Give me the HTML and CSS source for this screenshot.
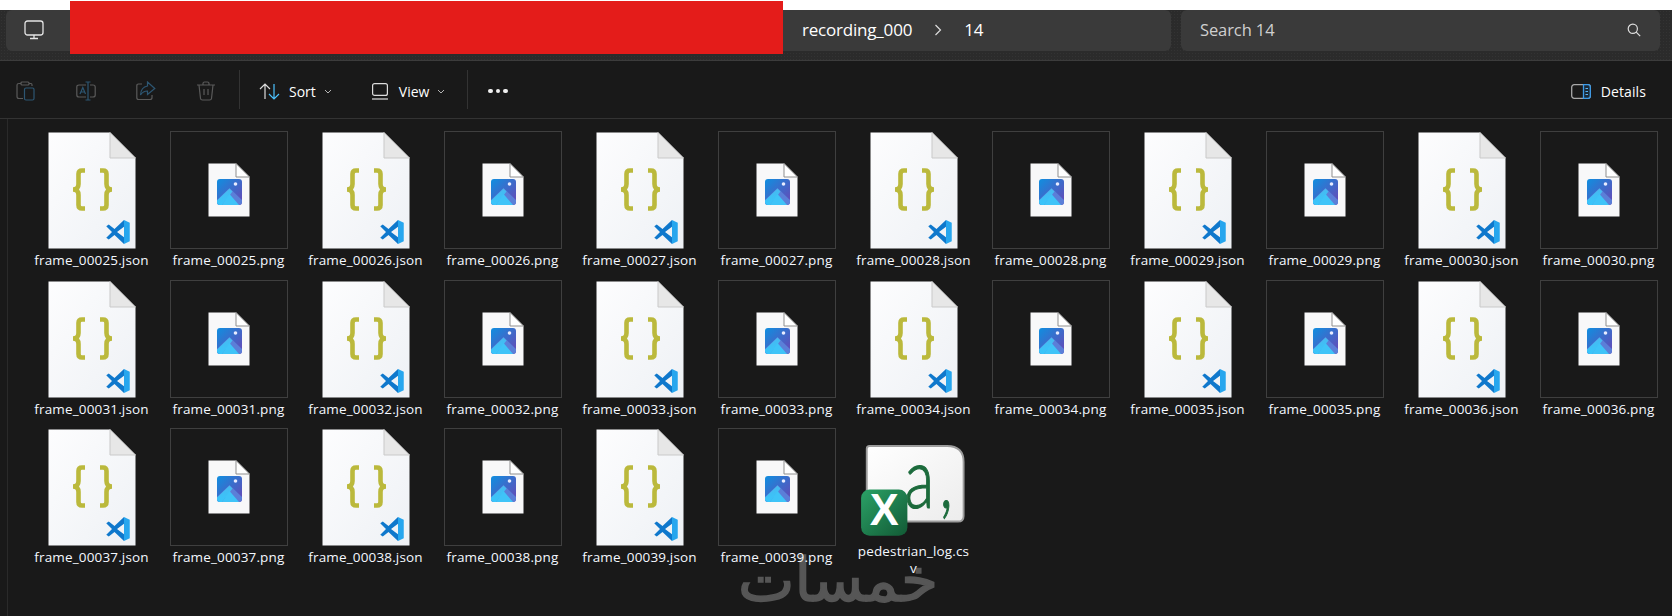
FILE: index.html
```html
<!DOCTYPE html>
<html lang="en">
<head>
<meta charset="utf-8">
<title>14 - File Explorer</title>
<link rel="stylesheet" href="styles.css">
</head>
<body>
<svg class="defs" width="0" height="0" aria-hidden="true">
  <defs>
    <linearGradient id="page" x1="0" y1="0" x2="1" y2="1"><stop offset="0" stop-color="#fdfdfe"/><stop offset="1" stop-color="#eef1f5"/></linearGradient>
    <linearGradient id="tile" x1="0" y1="0" x2="1" y2="1"><stop offset="0" stop-color="#0f8fe0"/><stop offset="1" stop-color="#6b46b4"/></linearGradient>
    <linearGradient id="peak" x1="0" y1="0" x2="0" y2="1"><stop offset="0" stop-color="#47b9f0"/><stop offset="1" stop-color="#38c6fb"/></linearGradient>
    <linearGradient id="xl" x1="0" y1="0" x2="1" y2="1"><stop offset="0" stop-color="#2ba267"/><stop offset="1" stop-color="#125a35"/></linearGradient>
    <linearGradient id="card" x1="0" y1="0" x2="1" y2="1"><stop offset="0" stop-color="#ffffff"/><stop offset="1" stop-color="#ececec"/></linearGradient>
    <symbol id="json" viewBox="0 0 88 117">
      <path d="M.5.5H62L87.500 26V116.500H.5Z" fill="url(#page)"/>
      <path d="M62 .5L87.500 26H62Z" fill="#e7e7e7" stroke="#c9c9c9"/>
      <g fill="none" stroke="#bbb93c" stroke-width="4.600">
        <path d="M37 38.500H34Q30.500 38.500 30.500 42V52Q30.500 57.500 25 57.500Q30.500 57.500 30.500 63V73Q30.500 76.500 34 76.500H37"/>
        <path d="M52 38.500H55Q58.500 38.500 58.500 42V52Q58.500 57.500 64 57.500Q58.500 57.500 58.500 63V73Q58.500 76.500 55 76.500H52"/>
      </g>
      <g transform="translate(57.500 87.500) scale(.25)">
        <path d="M74 2L97 13V87L74 98Z" fill="#27a6ee"/>
        <path d="M74 2L36 38L13 20L3 27L26 50L3 73L13 80L36 62L74 98V71L46 50L74 29Z" fill="#0f78cc"/>
      </g>
    </symbol>
    <symbol id="png" viewBox="0 0 42 54">
      <path d="M.5.5H28L41.500 14V53.500H.5Z" fill="#f8f8f9"/>
      <path d="M28 .5L41.500 14H28Z" fill="#fff" stroke="#8f8f8f"/>
      <rect x="9" y="16" width="25" height="26" rx="3" fill="url(#tile)"/>
      <circle cx="27.500" cy="21" r="1.800" fill="#e8ecff"/>
      <path d="M9 37L21.500 25L34 37V39Q34 42 31 42H12Q9 42 9 39Z" fill="#5b7fd8"/>
      <path d="M9 37.500L21.500 25.500L24.500 28.500L14 42H12Q9 42 9 39Z" fill="url(#peak)"/>
      <path d="M14 42L21.500 31L31 42Z" fill="#3fc4f8"/>
    </symbol>
    <symbol id="monitor" viewBox="0 0 20 20">
      <g fill="none" stroke="#e4e4e4" stroke-width="1.300">
        <rect x="1" y="1" width="18" height="14" rx="2.500"/>
        <path d="M6 18.500H14M10 15V18.500"/>
      </g>
    </symbol>
    <symbol id="chev-r" viewBox="0 0 8 12">
      <path d="M1.500 1L6.500 6L1.500 11" fill="none" stroke="#dcdcdc" stroke-width="1.200"/>
    </symbol>
    <symbol id="chev-d" viewBox="0 0 8 5">
      <path d="M1 1L4 4L7 1" fill="none" stroke="#b5b5b5" stroke-width="1"/>
    </symbol>
  </defs>
</svg>

<div class="window">
  <header class="topbar">
    <nav class="crumbs">
      <svg class="ico-monitor"><use href="#monitor"/></svg>
      <svg class="ico-chev"><use href="#chev-r"/></svg>
      <span class="crumb-spacer"></span>
      <span class="crumb">recording_000</span>
      <svg class="ico-chev near"><use href="#chev-r"/></svg>
      <span class="crumb">14</span>
    </nav>
    <div class="search">
      <span>Search 14</span>
      <svg class="ico-search" viewBox="0 0 14 14"><circle cx="5.800" cy="5.800" r="4.600" fill="none" stroke="#dedede" stroke-width="1.200"/><path d="M9.200 9.200L13.200 13.200" stroke="#dedede" stroke-width="1.200"/></svg>
    </div>
  </header>

  <div class="toolbar">
    <button class="tool"><svg class="ico-tool" viewBox="0 0 20 20"><g fill="none" stroke-width="1.200"><path d="M7 17.500H3Q1 17.500 1 15.500V4Q1 2.500 3 2.500H5M13 2.500H15Q16 2.500 16 4V5" stroke="#5a5a5a"/><rect x="5" y="1" width="8" height="3" rx="1" stroke="#5a5a5a"/><rect x="8.500" y="7" width="9.500" height="12" rx="1.500" stroke="#2d5672"/></g></svg></button>
    <button class="tool"><svg class="ico-tool" viewBox="0 0 20 20"><g fill="none" stroke-width="1.200"><path d="M10 4H3Q.800 4 .800 6V14Q.800 16 3 16H10M14 4H17Q19.200 4 19.200 6V14Q19.200 16 17 16H14" stroke="#5a5a5a"/><path d="M9.500 1H14.500M12 1V19M9.500 19H14.500" stroke="#2d5672"/><path d="M4 13L6.800 6.500L9.500 13M5 11H8.500" stroke="#2d5672"/></g></svg></button>
    <button class="tool"><svg class="ico-tool" viewBox="0 0 20 20"><g fill="none" stroke-width="1.200"><path d="M6 3H2.500Q.800 3 .800 5V16.500Q.800 18.500 2.500 18.500H14Q16 18.500 16 16.500V14" stroke="#5a5a5a"/><path d="M11.500 1L18.800 7.500L11.500 13.500V10Q7 10 4.500 14Q5 6 11.500 5Z" stroke="#2d5672"/></g></svg></button>
    <button class="tool"><svg class="ico-tool" viewBox="0 0 20 20"><g fill="none" stroke="#5a5a5a" stroke-width="1.200"><path d="M1 4H19M7 4V2.500Q7 1 8.500 1H11.500Q13 1 13 2.500V4M3 4L4.500 17.500Q4.700 19 6.500 19H13.500Q15.300 19 15.500 17.500L17 4M8 8V14M12 8V14"/></g></svg></button>
    <span class="divider first"></span>
    <button class="menu sort">
      <svg class="ico-sort" viewBox="0 0 21 17"><path d="M6 16V1M1 6L6 1L11 6" fill="none" stroke="#dcdcdc" stroke-width="1.200"/><path d="M15 1V16M10 11L15 16L20 11" fill="none" stroke="#4cc2ff" stroke-width="1.200"/></svg>
      <span>Sort</span>
      <svg class="ico-down"><use href="#chev-d"/></svg>
    </button>
    <button class="menu view">
      <svg class="ico-view" viewBox="0 0 16 17"><g fill="none" stroke="#dcdcdc" stroke-width="1.200"><rect x=".6" y=".6" width="14.800" height="11.800" rx="2"/><path d="M0 16H16"/></g></svg>
      <span>View</span>
      <svg class="ico-down"><use href="#chev-d"/></svg>
    </button>
    <span class="divider second"></span>
    <button class="more"><i></i><i></i><i></i></button>
    <button class="details">
      <svg class="ico-details" viewBox="0 0 20 15"><rect x=".7" y=".7" width="18.600" height="13.600" rx="2.500" fill="none" stroke="#a8a8a8" stroke-width="1.300"/><path d="M12.500.7H17Q19.300.7 19.300 3V12Q19.300 14.300 17 14.300H12.500Z" fill="#1a2a38" stroke="#3c9be8" stroke-width="1.300"/><path d="M14.500 4.500H17M14.500 7.500H17M14.500 10.500H17" stroke="#58b4f5"/></svg>
      <span>Details</span>
    </button>
  </div>

  <main class="content">
    <div class="files">
      <div class="item"><svg class="thumb-json"><use href="#json"/></svg><span class="name">frame_00025.json</span></div>
      <div class="item"><div class="frame"><svg class="thumb-png"><use href="#png"/></svg></div><span class="name">frame_00025.png</span></div>
      <div class="item"><svg class="thumb-json"><use href="#json"/></svg><span class="name">frame_00026.json</span></div>
      <div class="item"><div class="frame"><svg class="thumb-png"><use href="#png"/></svg></div><span class="name">frame_00026.png</span></div>
      <div class="item"><svg class="thumb-json"><use href="#json"/></svg><span class="name">frame_00027.json</span></div>
      <div class="item"><div class="frame"><svg class="thumb-png"><use href="#png"/></svg></div><span class="name">frame_00027.png</span></div>
      <div class="item"><svg class="thumb-json"><use href="#json"/></svg><span class="name">frame_00028.json</span></div>
      <div class="item"><div class="frame"><svg class="thumb-png"><use href="#png"/></svg></div><span class="name">frame_00028.png</span></div>
      <div class="item"><svg class="thumb-json"><use href="#json"/></svg><span class="name">frame_00029.json</span></div>
      <div class="item"><div class="frame"><svg class="thumb-png"><use href="#png"/></svg></div><span class="name">frame_00029.png</span></div>
      <div class="item"><svg class="thumb-json"><use href="#json"/></svg><span class="name">frame_00030.json</span></div>
      <div class="item"><div class="frame"><svg class="thumb-png"><use href="#png"/></svg></div><span class="name">frame_00030.png</span></div>
      <div class="item"><svg class="thumb-json"><use href="#json"/></svg><span class="name">frame_00031.json</span></div>
      <div class="item"><div class="frame"><svg class="thumb-png"><use href="#png"/></svg></div><span class="name">frame_00031.png</span></div>
      <div class="item"><svg class="thumb-json"><use href="#json"/></svg><span class="name">frame_00032.json</span></div>
      <div class="item"><div class="frame"><svg class="thumb-png"><use href="#png"/></svg></div><span class="name">frame_00032.png</span></div>
      <div class="item"><svg class="thumb-json"><use href="#json"/></svg><span class="name">frame_00033.json</span></div>
      <div class="item"><div class="frame"><svg class="thumb-png"><use href="#png"/></svg></div><span class="name">frame_00033.png</span></div>
      <div class="item"><svg class="thumb-json"><use href="#json"/></svg><span class="name">frame_00034.json</span></div>
      <div class="item"><div class="frame"><svg class="thumb-png"><use href="#png"/></svg></div><span class="name">frame_00034.png</span></div>
      <div class="item"><svg class="thumb-json"><use href="#json"/></svg><span class="name">frame_00035.json</span></div>
      <div class="item"><div class="frame"><svg class="thumb-png"><use href="#png"/></svg></div><span class="name">frame_00035.png</span></div>
      <div class="item"><svg class="thumb-json"><use href="#json"/></svg><span class="name">frame_00036.json</span></div>
      <div class="item"><div class="frame"><svg class="thumb-png"><use href="#png"/></svg></div><span class="name">frame_00036.png</span></div>
      <div class="item"><svg class="thumb-json"><use href="#json"/></svg><span class="name">frame_00037.json</span></div>
      <div class="item"><div class="frame"><svg class="thumb-png"><use href="#png"/></svg></div><span class="name">frame_00037.png</span></div>
      <div class="item"><svg class="thumb-json"><use href="#json"/></svg><span class="name">frame_00038.json</span></div>
      <div class="item"><div class="frame"><svg class="thumb-png"><use href="#png"/></svg></div><span class="name">frame_00038.png</span></div>
      <div class="item"><svg class="thumb-json"><use href="#json"/></svg><span class="name">frame_00039.json</span></div>
      <div class="item"><div class="frame"><svg class="thumb-png"><use href="#png"/></svg></div><span class="name">frame_00039.png</span></div>
      <div class="item">
        <svg class="thumb-csv" viewBox="0 0 118 118">
          <path d="M12 19H94Q111.500 19 111.500 36V93Q111.500 99 105.500 99H12Q9 99 9 96V22Q9 19 12 19Z" fill="url(#card)" stroke="#9c9c9c" stroke-width="2"/>
          <text class="csv-a" transform="translate(49 85) scale(.72 1)">a<tspan dx="8">,</tspan></text>
          <rect x="3" y="65" width="49" height="49" rx="9" fill="url(#xl)"/>
          <text class="csv-x" x="27.500" y="103" text-anchor="middle">X</text>
        </svg>
        <span class="name">pedestrian_log.cs<br>v</span>
      </div>
    </div>
  </main>
</div>

<div class="redaction"></div>
<div class="watermark" lang="ar" dir="rtl">خمسات</div>
</body>
</html>
```

FILE: styles.css
```css
* { box-sizing: border-box; }

html, body {
  margin: 0;
  height: 616px;
  overflow: hidden;
  background: #191919;
  font-family: "Open Sans", "Noto Sans", "Liberation Sans", sans-serif;
  color: #fff;
}

.defs { display: block; height: 0; }

.window {
  display: flex;
  flex-direction: column;
  height: 616px;
  border-top: 10px solid #fff;
}

/* address row */
.topbar {
  display: flex;
  flex: none;
  gap: 10px;
  height: 51px;
  padding: 0 12px 9px 6px;
  background-color: #2b2b2b;
  background-image: radial-gradient(#333 .7px, transparent .8px);
  background-size: 3px 3px;
  border-bottom: 1px solid #3c3c3c;
}

.crumbs, .search {
  display: flex;
  align-items: center;
  background: #3a3a3a;
  border-radius: 6px;
}

.crumbs {
  flex: none;
  width: 1165px;
  padding-left: 18px;
  padding-bottom: 2px;
  font-size: 17px;
  letter-spacing: -.2px;
}

.ico-monitor { width: 20px; height: 20px; flex: none; }
.ico-chev { width: 8px; height: 12px; flex: none; margin-left: 27px; }
.ico-chev.near { margin-left: 22px; }
.crumbs .ico-chev + .crumb { margin-left: 22px; }
.crumb-spacer { width: 723px; flex: none; }
.crumb { white-space: nowrap; }

.search {
  flex: 1;
  justify-content: space-between;
  padding: 0 19px 2px 19px;
  font-size: 16.5px;
  letter-spacing: -.1px;
  color: #cfcfcf;
}

.ico-search { width: 14px; height: 14px; }

/* command bar */
.toolbar {
  display: flex;
  flex: none;
  align-items: center;
  height: 58px;
  padding: 3px 26px 0 6px;
  border-bottom: 1px solid #333;
  font-size: 14px;
}

button {
  display: flex;
  align-items: center;
  padding: 0;
  border: 0;
  background: none;
  color: inherit;
  font: inherit;
}

.tool {
  justify-content: center;
  width: 40px;
  margin-right: 20px;
}
.tool:nth-of-type(4) { margin-right: 0; }

.ico-tool { width: 20px; height: 20px; }

.divider {
  flex: none;
  width: 1px;
  height: 39px;
  margin-top: -3px;
  background: #333;
}
.divider.first { margin-left: 13px; }

.sort { margin-left: 19px; }
.view { margin-left: 40px; }
.ico-sort { width: 21px; height: 17px; margin-right: 9px; }
.ico-view { width: 16px; height: 17px; margin-right: 11px; }
.ico-down { width: 8px; height: 5px; margin-left: 8px; }
.divider.second { margin-left: 22px; }

.more { gap: 3px; margin-left: 20px; }
.more i {
  display: block;
  width: 4.500px;
  height: 4.500px;
  border-radius: 50%;
  background: #f0f0f0;
}

.details { margin-left: auto; }
.ico-details { width: 20px; height: 15px; margin-right: 10px; }
.details span { letter-spacing: .1px; }

/* file grid */
.content {
  position: relative;
  z-index: 1;
  flex: 1;
  margin-left: 7px;
  padding: 12px 0 0 15px;
  border-left: 1px solid #2a2a2a;
}

.files {
  display: grid;
  grid-template-columns: repeat(12, 137px);
  grid-auto-rows: 148.500px;
}

.item {
  display: flex;
  flex-direction: column;
  align-items: center;
}

.thumb-json { display: block; width: 88px; height: 117px; margin-top: 1px; }
.thumb-csv { display: block; width: 118px; height: 118px; }

.frame {
  display: flex;
  align-items: center;
  justify-content: center;
  width: 118px;
  height: 118px;
  border: 1px solid #3f3f3f;
}

.thumb-png { display: block; width: 42px; height: 54px; }

.name {
  width: 134px;
  margin-top: 3px;
  font-size: 13.500px;
  line-height: 17px;
  letter-spacing: .15px;
  text-align: center;
  color: #f4f8ff;
}

.csv-a {
  font-family: "Lato", "Open Sans", sans-serif;
  font-weight: 300;
  font-size: 90px;
  fill: #1c6b3c;
  stroke: #1c6b3c;
  stroke-width: 1.200px;
}

.csv-x {
  font-family: "Liberation Sans", sans-serif;
  font-weight: 700;
  font-size: 46px;
  fill: #fff;
}

/* overlays */
.redaction {
  position: absolute;
  left: 70px;
  top: 1px;
  width: 713px;
  height: 53px;
  background: #e41c1a;
}

.watermark {
  position: absolute;
  left: 738px;
  top: 544px;
  width: 200px;
  font-family: "DejaVu Sans", sans-serif;
  font-weight: 400;
  font-size: 60px;
  line-height: 72px;
  text-align: center;
  white-space: nowrap;
  color: #565656;
  -webkit-text-stroke: 1.500px #565656;
}
```
